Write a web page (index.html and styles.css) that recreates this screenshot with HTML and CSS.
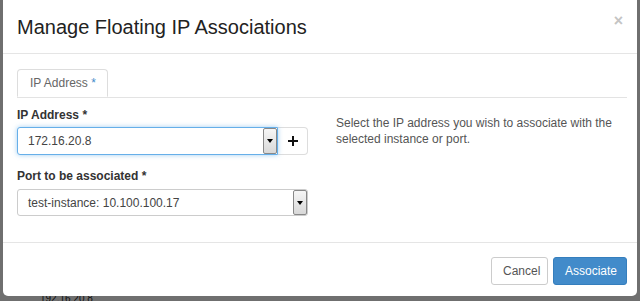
FILE: index.html
```html
<!DOCTYPE html>
<html>
<head>
<meta charset="utf-8">
<link rel="stylesheet" href="styles.css">
</head>
<body>
<div class="modal">
  <div class="modal-header">
    <h3 class="modal-title">Manage Floating IP Associations</h3>
    <span class="close">&times;</span>
  </div>
  <div class="modal-body">
    <div class="tabs">
      <div class="tab">IP Address <span class="req">*</span></div>
    </div>
    <div class="row">
      <div class="left">
        <label class="lbl">IP Address <span class="req-b">*</span></label>
        <div class="input-group">
          <div class="select focus">
            <span class="val">172.16.20.8</span>
            <span class="arrow"><svg width="6" height="4" viewBox="0 0 6 4"><path d="M0 0h6L3 4z" fill="#000"/></svg></span>
          </div>
          <div class="plus"><svg width="10" height="10" viewBox="0 0 10 10"><path d="M4 0h2v4h4v2H6v4H4V6H0V4h4z" fill="#111"/></svg></div>
        </div>
        <label class="lbl lbl2">Port to be associated <span class="req-b">*</span></label>
        <div class="select wide">
          <span class="val">test-instance: 10.100.100.17</span>
          <span class="arrow"><svg width="6" height="4" viewBox="0 0 6 4"><path d="M0 0h6L3 4z" fill="#000"/></svg></span>
        </div>
      </div>
      <div class="right">
        <p>Select the IP address you wish to associate with the selected instance or port.</p>
      </div>
    </div>
  </div>
  <div class="modal-footer">
    <button class="btn btn-default">Cancel</button>
    <button class="btn btn-primary">Associate</button>
  </div>
</div>
<div class="backdrop-text">192.16.20.8</div>
</body>
</html>
```
FILE: styles.css
```css
html, body {
  margin: 0;
  padding: 0;
}
body {
  background: #6f6f6f;
  font-family: "Liberation Sans", Arial, sans-serif;
  color: #333;
  width: 640px;
  height: 301px;
  overflow: hidden;
  position: relative;
}
.modal {
  margin-left: 3px;
  width: 634px;
  height: 296px;
  background: #fff;
  border-radius: 0 0 5px 5px;
  box-sizing: border-box;
  display: flex;
  flex-direction: column;
  position: relative;
  z-index: 1;
}
.modal-header {
  height: 54px;
  border-bottom: 1px solid #e5e5e5;
  box-sizing: border-box;
  display: flex;
  align-items: center;
  justify-content: space-between;
  padding: 0 14px 0 14px;
}
.modal-title {
  margin: 0;
  font-size: 20px;
  font-weight: normal;
  color: #222;
  padding-top: 2px;
}
.close {
  font-size: 16px;
  color: #c4c4c4;
  font-weight: bold;
  padding-bottom: 12px;
}
.modal-body {
  padding: 15px 10px 0 14px;
  height: 188px;
  box-sizing: border-box;
}
.tabs {
  border-bottom: 1px solid #e3e3e3;
  height: 28px;
  display: flex;
}
.tab {
  width: 91px;
  height: 28px;
  box-sizing: border-box;
  border: 1px solid #ddd;
  border-bottom-color: #fff;
  border-radius: 4px 4px 0 0;
  background: #fff;
  font-size: 12px;
  color: #666;
  padding-left: 12px;
  line-height: 27px;
}
.req { color: #428bca; }
.row {
  display: flex;
  margin-top: 10px;
}
.left {
  width: 291px;
  display: flex;
  flex-direction: column;
}
.lbl {
  font-size: 12px;
  font-weight: bold;
  color: #333;
  height: 15px;
  line-height: 15px;
  margin-bottom: 4px;
}
.lbl2 { margin-top: 14px; margin-bottom: 5px; }
.req-b { font-weight: bold; }
.input-group {
  display: flex;
  height: 28px;
}
.select {
  position: relative;
  height: 28px;
  box-sizing: border-box;
  border: 1px solid #ccc;
  border-radius: 3px 0 0 3px;
  display: flex;
  align-items: center;
  justify-content: space-between;
  padding: 0 0 0 10px;
  font-size: 12px;
  color: #444;
  background: #fff;
}
.select.focus {
  width: 261px;
  border-color: #66afe9;
  box-shadow: 0 0 5px rgba(102,175,233,0.6);
  z-index: 1;
}
.select.wide {
  width: 291px;
  border-radius: 3px;
  height: 27px;
}
.arrow {
  width: 14px;
  height: 100%;
  box-sizing: border-box;
  border: 1px solid #888;
  border-radius: 2px;
  background: linear-gradient(#f6f6f6, #d8d8d8);
  display: flex;
  align-items: center;
  justify-content: center;
}
.plus {
  width: 30px;
  height: 28px;
  box-sizing: border-box;
  border: 1px solid #ddd;
  border-left: none;
  border-radius: 0 4px 4px 0;
  display: flex;
  align-items: center;
  justify-content: center;
  background: #fff;
}
.right {
  padding-left: 28px;
  flex: 1;
}
.right p {
  margin: 7px 0 0 0;
  font-size: 12px;
  line-height: 16px;
  color: #555;
  width: 280px;
}
.modal-footer {
  border-top: 1px solid #e5e5e5;
  flex: 1;
  display: flex;
  justify-content: flex-end;
  align-items: flex-start;
  padding: 14px 10px 0 0;
  gap: 5px;
}
.btn {
  height: 28px;
  font-family: "Liberation Sans", Arial, sans-serif;
  font-size: 12px;
  border-radius: 3px;
  padding: 0 11px;
  cursor: pointer;
}
.btn-default {
  background: #fff;
  border: 1px solid #ccc;
  color: #555;
  width: 57px;
}
.btn-primary {
  background: #428bca;
  border: 1px solid #357ebd;
  color: #fff;
  width: 74px;
}
.backdrop-text {
  position: absolute;
  left: 40px;
  top: 296px;
  font-size: 10px;
  line-height: 5px;
  height: 5px;
  overflow: hidden;
  color: #111;
}
```
